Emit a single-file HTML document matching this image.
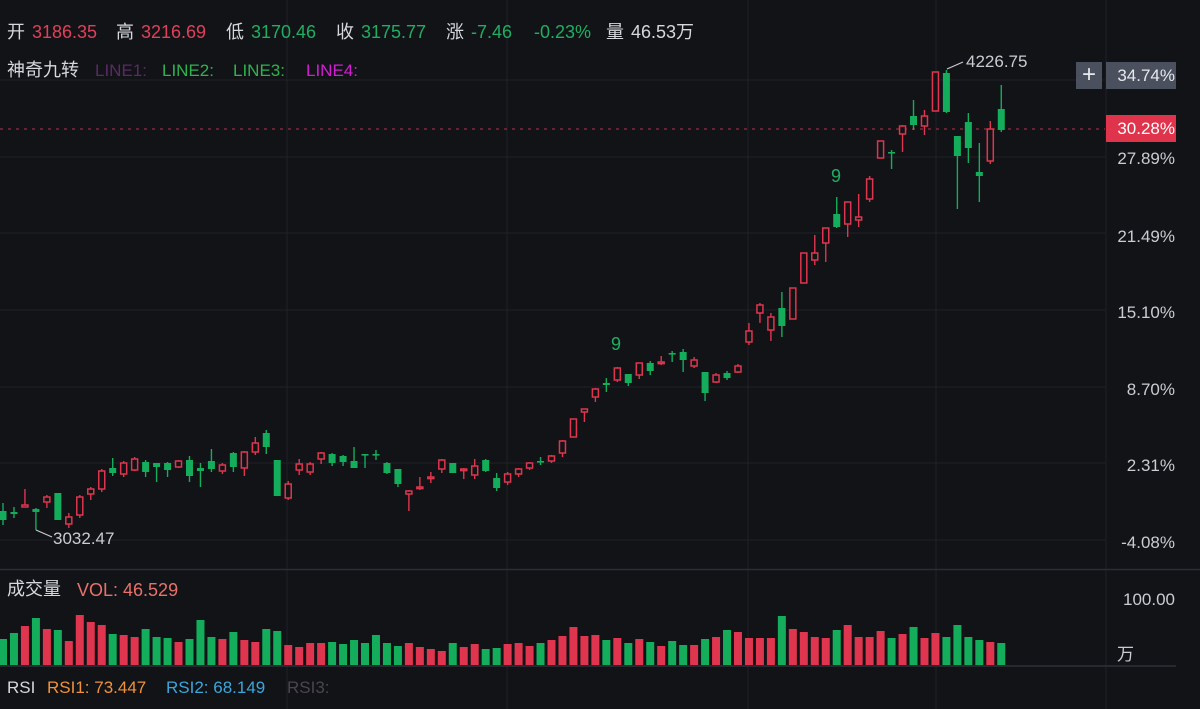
<!DOCTYPE html>
<html><head><meta charset="utf-8">
<style>
html,body{margin:0;padding:0;background:#121317;}
body{width:1200px;height:709px;overflow:hidden;position:relative;font-family:"Liberation Sans","Noto Sans CJK SC",sans-serif;}
.t{position:absolute;font-size:18px;white-space:nowrap;line-height:1;}
.w{color:#d6d8de}.r{color:#e0405a}.g{color:#1fae62}
.ax{position:absolute;right:25px;font-size:17px;color:#c9ccd3;line-height:1;}
svg{position:absolute;left:0;top:0;}
</style></head><body>
<svg id="s" width="1200" height="709" xmlns="http://www.w3.org/2000/svg"></svg>

<div class="t w" style="left:7px;top:23px">开</div><div class="t r" style="left:32px;top:23px">3186.35</div>
<div class="t w" style="left:116px;top:23px">高</div><div class="t r" style="left:141px;top:23px">3216.69</div>
<div class="t w" style="left:226px;top:23px">低</div><div class="t g" style="left:251px;top:23px">3170.46</div>
<div class="t w" style="left:336px;top:23px">收</div><div class="t g" style="left:361px;top:23px">3175.77</div>
<div class="t w" style="left:446px;top:23px">涨</div><div class="t g" style="left:471px;top:23px">-7.46</div>
<div class="t g" style="left:534px;top:23px">-0.23%</div>
<div class="t w" style="left:606px;top:23px">量</div><div class="t w" style="left:631px;top:23px">46.53万</div>

<div class="t w" style="left:7px;top:61px">神奇九转</div>
<div class="t" style="left:95px;top:62px;color:#5a2a66;font-size:17px">LINE1:</div>
<div class="t" style="left:162px;top:62px;color:#2fb34f;font-size:17px">LINE2:</div>
<div class="t" style="left:233px;top:62px;color:#2fb34f;font-size:17px">LINE3:</div>
<div class="t" style="left:306px;top:62px;color:#d51cd4;font-size:17px">LINE4:</div>

<div class="t g" style="left:611px;top:335px">9</div>
<div class="t g" style="left:831px;top:167px">9</div>
<div class="t" style="left:966px;top:53px;color:#c9ccd3;font-size:17px">4226.75</div>
<div class="t" style="left:53px;top:530px;color:#c9ccd3;font-size:17px">3032.47</div>

<div style="position:absolute;left:1076px;top:62px;width:26px;height:27px;background:#4a505d;color:#e6e8ec;font-size:24px;line-height:26px;text-align:center">+</div>
<div style="position:absolute;left:1106px;top:62px;width:70px;height:27px;background:#4a505d;"></div>
<div class="ax" style="top:67px;color:#e6e8ec">34.74%</div>
<div style="position:absolute;left:1106px;top:115px;width:70px;height:27px;background:#e0334c;"></div>
<div class="ax" style="top:120px;color:#fff">30.28%</div>
<div class="ax" style="top:150px">27.89%</div>
<div class="ax" style="top:228px">21.49%</div>
<div class="ax" style="top:304px">15.10%</div>
<div class="ax" style="top:381px">8.70%</div>
<div class="ax" style="top:457px">2.31%</div>
<div class="ax" style="top:534px">-4.08%</div>
<div class="ax" style="top:591px">100.00</div>
<div class="ax" style="top:646px;right:66px">万</div>

<div class="t w" style="left:7px;top:580px">成交量</div>
<div class="t" style="left:77px;top:581px;color:#e8726b">VOL: 46.529</div>
<div class="t w" style="left:7px;top:679px;font-size:17px">RSI</div>
<div class="t" style="left:47px;top:679px;font-size:17px;color:#f0923a">RSI1: 73.447</div>
<div class="t" style="left:166px;top:679px;font-size:17px;color:#3ba6dc">RSI2: 68.149</div>
<div class="t" style="left:287px;top:679px;font-size:17px;color:#4a4550">RSI3:</div>

<script>
var C=[
['g',511,520,503,525],['g',512,514,507,518],['r',505,507,489,507],['g',509,512,508,530],['r',497,502,495,508],['g',493,520,493,520],['r',517,524,513,528],['r',497,515,495,518],['r',489,494,487,500],['r',471,489,469,492],
['g',468,473,458,476],['r',463,474,461,477],['r',459,470,457,471],['g',462,472,460,477],['g',463,467,463,482],['g',463,470,462,477],['r',461,467,460,468],['g',460,476,456,482],['g',468,471,463,487],['g',461,469,449,472],
['r',465,471,463,474],['g',453,467,452,472],['r',452,468,451,476],['r',443,452,437,455],['g',433,447,430,454],['g',460,496,460,496],['r',484,498,481,500],['r',464,470,459,475],['r',464,472,462,475],['r',453,459,452,464],
['g',454,463,453,466],['g',456,462,455,466],['g',461,468,447,468],['g',454,455,454,468],['g',454,455,450,460],['g',463,473,462,474],['g',469,484,469,487],['r',491,494,490,511],['r',487,488,477,490],['r',477,478,472,483],
['r',460,469,459,473],['g',463,473,463,473],['r',469,470,468,479],['r',466,475,459,479],['g',460,471,459,472],['g',478,488,473,491],['r',474,482,472,485],['r',469,474,468,477],['r',463,468,462,470],['g',461,462,457,465],
['r',456,461,455,463],['r',441,453,440,457],['r',419,437,419,437],['r',409,412,409,422],['r',389,397,388,402],['g',383,385,378,392],['r',368,380,367,382],['g',374,383,374,386],['r',363,375,363,379],['g',363,371,361,375],
['r',362,363,356,365],['g',353,354,351,362],['g',352,360,349,372],['r',360,366,357,368],['g',372,393,372,401],['r',375,382,373,383],['g',373,378,371,380],['r',366,372,364,373],['r',331,342,323,345],['r',305,313,303,323],
['r',317,330,313,341],['g',308,326,292,337],['r',288,319,288,319],['r',253,283,253,283],['r',253,260,235,265],['r',228,243,228,262],['g',214,227,197,228],['r',202,224,202,237],['r',217,220,194,227],['r',179,199,176,202],
['r',141,158,141,158],['g',152,153,150,169],['r',126,134,125,152],['g',116,125,100,130],['r',116,126,110,135],['r',72,111,72,111],['g',73,112,70,113],['g',136,156,136,209],['g',122,148,113,163],['g',172,176,143,202],
['r',129,161,121,164],['g',109,130,85,132]];
var V=[639,633,626,618,629,630,641,615,622,625,634,635,637,629,637,638,642,639,620,637,639,632,640,642,629,631,645,647,643,643,642,644,640,643,635,643,
646,643,647,649,651,643,647,644,649,648,644,643,646,643,640,636,627,636,635,640,638,643,639,642,646,641,645,645,639,637,630,632,638,638,638,616,629,632,637,638,630,625,637,637,631,638,634,627,638,633,637,625,637,640,642,643];
var RED='#e0354e',GRN='#13ad5c',o='';
[80,157,233,310,387,463,540].forEach(function(y){o+='<line x1="0" x2="1105" y1="'+y+'" y2="'+y+'" stroke="#1f2128" stroke-width="1"/>';});
[287,507,748,936,1106].forEach(function(x){o+='<line x1="'+x+'" x2="'+x+'" y1="0" y2="709" stroke="#1f2128" stroke-width="1"/>';});
o+='<line x1="0" x2="1200" y1="569.5" y2="569.5" stroke="#2a2d35" stroke-width="1.5"/>';
o+='<line x1="0" x2="1176" y1="666" y2="666" stroke="#2e3139" stroke-width="1.5"/>';
o+='<line x1="0" x2="1105" y1="129" y2="129" stroke="#b83247" stroke-width="1" stroke-dasharray="3,5"/>';
for(var i=0;i<C.length;i++){
 var x=3+i*10.97,c=C[i],col=c[0]=='r'?RED:GRN;
 o+='<line x1="'+x+'" x2="'+x+'" y1="'+c[3]+'" y2="'+c[4]+'" stroke="'+col+'" stroke-width="1.4"/>';
 var h=Math.max(c[2]-c[1],1.6);
 if(c[0]=='r'){o+='<rect x="'+(x-3)+'" y="'+c[1]+'" width="6" height="'+h+'" fill="#121317" stroke="'+col+'" stroke-width="1.5"/>';}
 else{o+='<rect x="'+(x-3.5)+'" y="'+c[1]+'" width="7" height="'+h+'" fill="'+col+'"/>';}
 o+='<rect x="'+(x-4)+'" y="'+V[i]+'" width="8" height="'+(665-V[i])+'" fill="'+col+'"/>';
}
o+='<line x1="947" y1="69" x2="963" y2="62" stroke="#c9ccd3" stroke-width="1.2"/>';
o+='<line x1="36" y1="530" x2="52" y2="537" stroke="#c9ccd3" stroke-width="1.2"/>';
document.getElementById('s').innerHTML=o;
</script>
</body></html>
